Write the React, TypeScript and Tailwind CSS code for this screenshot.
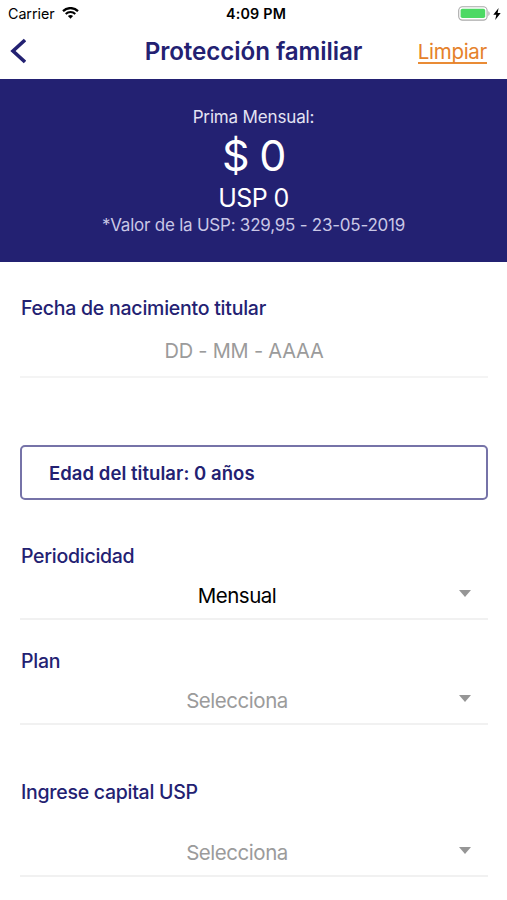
import React from 'react';

interface FieldProps {
  label: string;
  value: string;
  filled?: boolean;
  className?: string;
  valueClassName?: string;
}

function StatusBar() {
  return (
    <div className="flex h-[27px] items-center justify-between pl-2 pr-[6px] text-black">
      <div className="flex w-[120px] items-center gap-[7px]">
        <span className="pt-px text-[14.3px] leading-none tracking-[-0.05px]">Carrier</span>
        <svg className="h-3 w-[17px]" viewBox="0 0 17 12">
          <path d="M1 4.1a10.7 10.7 0 0 1 15 0" fill="none" stroke="#000" strokeWidth="2.2" />
          <path d="M3.7 7a6.9 6.9 0 0 1 9.6 0" fill="none" stroke="#000" strokeWidth="2" />
          <path d="M5.9 9.1a3.8 3.8 0 0 1 5.2 0L8.5 11.8z" />
        </svg>
      </div>
      <span className="pl-[3px] pt-px text-[14.3px] font-semibold leading-none tracking-[0.2px]">4:09 PM</span>
      <div className="flex w-[120px] items-center justify-end gap-[2px]">
        <svg className="h-[15px] w-[33px]" viewBox="0 0 33 15">
          <rect x="0.7" y="0.7" width="28.4" height="13.4" rx="3.8" fill="#fff" stroke="#a9a9a9" strokeWidth="1.1" />
          <rect x="2.6" y="2.7" width="24.6" height="9.4" rx="1.8" fill="#4cd964" />
          <path d="M30.4 5.2c1.6.7 1.6 4 0 4.7z" fill="#a9a9a9" />
        </svg>
        <svg className="h-3 w-2" viewBox="0 0 8 12">
          <path d="M5.6 0 .3 6.7h3L2.2 12l5.5-7H4.6z" />
        </svg>
      </div>
    </div>
  );
}

function NavBar() {
  return (
    <header className="grid h-[52px] grid-cols-[90px_1fr_90px] items-center pb-[3px] pl-[10px] pr-5">
      <svg className="mb-[2px] h-[26px] w-4" viewBox="0 0 16 26">
        <path d="M15 2 3 13l12 11" fill="none" stroke="#232172" strokeWidth="3.6" />
      </svg>
      <h1 className="whitespace-nowrap pl-[10px] pt-[2px] text-center text-[24.2px] font-semibold tracking-[-0.08px]">
        Protección familiar
      </h1>
      <button className="mt-px justify-self-end border-b-2 border-[#e98b35] pt-px text-[20.5px] leading-[21px] tracking-[-0.3px] text-[#e5812a]">
        Limpiar
      </button>
    </header>
  );
}

function PremiumBanner() {
  return (
    <section className="flex h-[183px] flex-col items-center bg-[#232172] pt-[26px] text-white">
      <p className="text-[17px] leading-6 tracking-[-0.15px] text-[#e4e3f3]">Prima Mensual:</p>
      <p className="text-[43px] leading-[52px] tracking-[-1.2px]">$ 0</p>
      <p className="pt-px text-[25px] leading-[32px] tracking-[-0.6px]">USP 0</p>
      <p className="text-[17px] leading-[22px] tracking-[-0.23px] text-[#c9c7e6]">
        *Valor de la USP: 329,95 - 23-05-2019
      </p>
    </section>
  );
}

function SelectField({ label, value, filled, className = '', valueClassName = '' }: FieldProps) {
  return (
    <div className={className}>
      <p className="pl-px text-[19.5px] font-medium leading-6 tracking-[-0.27px]">{label}</p>
      <div className={`flex items-center border-b-2 border-[#f1f1f1] ${valueClassName}`}>
        <span className={`flex-1 pr-[5px] text-center text-[20.5px] leading-6 tracking-[-0.47px] ${filled ? 'text-black' : 'text-[#9b9b9b]'}`}>
          {value}
        </span>
        <svg className="mr-[17px] mb-[5px] h-[7px] w-3" viewBox="0 0 12 7">
          <path d="M0 0h12L6 7z" fill="#969696" />
        </svg>
      </div>
    </div>
  );
}

export default function App() {
  return (
    <div className="h-[900px] w-[507px] overflow-hidden bg-white font-['Inter','Liberation_Sans',sans-serif] text-[#232172]">
      <StatusBar />
      <NavBar />
      <PremiumBanner />

      <main className="pl-5 pr-[19px] pt-[34px]">
        <p className="pl-px text-[19.5px] font-medium leading-6 tracking-[-0.24px]">Fecha de nacimiento titular</p>
        <div className="mt-[18px] h-[40px] border-b-2 border-[#f4f4f4] pr-5 pt-px text-center text-[20px] leading-6 tracking-[-0.2px] text-[#9b9b9b]">
          DD - MM - AAAA
        </div>

        <div className="mt-[67px] flex h-[55px] items-center rounded-[5px] border-2 border-[#7673a8] pl-[27px] pt-[2px] text-[18.5px] font-semibold tracking-[0.05px]">
          Edad del titular: 0 años
        </div>

        <SelectField className="mt-11" label="Periodicidad" value="Mensual" filled valueClassName="mt-4 h-[36px] pb-[10px]" />
        <SelectField className="mt-[29px]" label="Plan" value="Selecciona" valueClassName="mt-4 h-[36px] pb-[11px]" />
        <SelectField className="mt-[55px]" label="Ingrese capital USP" value="Selecciona" valueClassName="mt-[37px] h-[36px] pb-[10px]" />
      </main>
    </div>
  );
}
